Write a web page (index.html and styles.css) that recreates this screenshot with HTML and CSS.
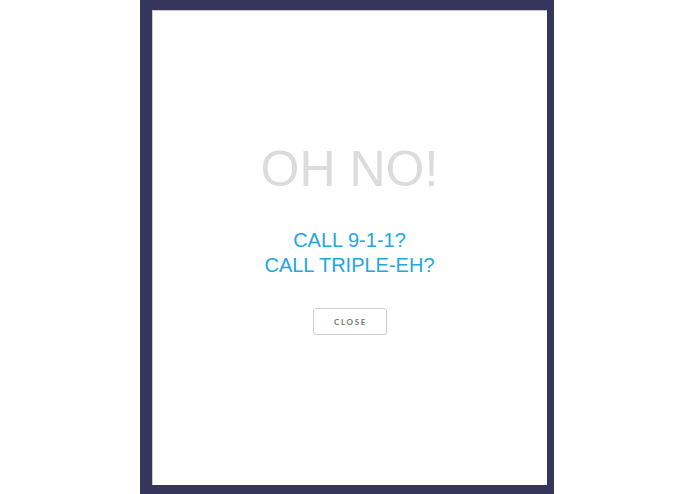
FILE: index.html
```html
<!DOCTYPE html>
<html>
<head>
<meta charset="utf-8">
<link rel="stylesheet" href="styles.css">
</head>
<body>
<div class="frame">
  <div class="panel">
    <h1 class="title">OH NO!</h1>
    <p class="message">CALL 9-1-1?<br>CALL TRIPLE-EH?</p>
    <button class="close-btn">CLOSE</button>
  </div>
</div>
</body>
</html>
```
FILE: styles.css
```css
html, body {
  margin: 0;
  padding: 0;
  background: #ffffff;
}
body {
  width: 695px;
  height: 494px;
  overflow: hidden;
  font-family: "Liberation Sans", Arial, sans-serif;
}
.frame {
  box-sizing: border-box;
  margin-left: 140px;
  width: 414px;
  height: 494px;
  background: #36355c;
  padding: 10px 7px 9px 12px;
}
.panel {
  box-sizing: border-box;
  height: 475px;
  background: #ffffff;
  box-shadow: inset 1px 1px 0 #c9c8d8;
  display: flex;
  flex-direction: column;
  align-items: center;
  padding-top: 134px;
}
.title {
  margin: 0;
  font-size: 50px;
  line-height: 50px;
  font-weight: 400;
  color: #dcdcdc;
}
.message {
  margin: 34px 0 0;
  font-size: 20px;
  line-height: 24.5px;
  color: #22a8dd;
  text-align: center;
}
.close-btn {
  margin-top: 31px;
  box-sizing: border-box;
  width: 74px;
  height: 27px;
  background: #ffffff;
  border: 1px solid #cfcfcf;
  border-radius: 3px;
  font-family: Lato, "Liberation Sans", sans-serif;
  font-weight: 700;
  font-size: 8px;
  letter-spacing: 1.7px;
  padding: 0 0 0 2px;
  color: #777777;
}
```
